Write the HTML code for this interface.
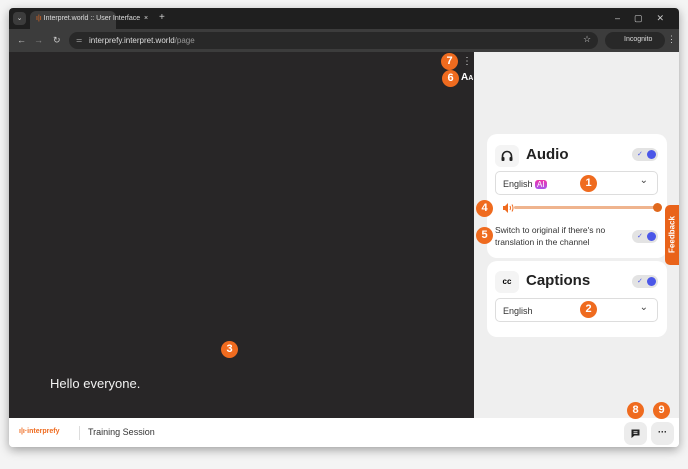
<!DOCTYPE html><html><head><style>
*{box-sizing:border-box;margin:0;padding:0}
body{width:688px;height:469px;background:#f4f4f4;font-family:"Liberation Sans",sans-serif;position:relative;overflow:hidden}
.a{position:absolute}
.win{left:9px;top:8px;width:670px;height:439px;background:#fff;box-shadow:0 3px 10px rgba(0,0,0,.35);border-radius:4px;overflow:hidden}
.b{position:absolute;width:17px;height:17px;border-radius:50%;background:#ef6b1f;color:#fff;font-weight:bold;font-size:11px;text-align:center;line-height:17px}
.card{background:#fff;border-radius:10px}
.tg{width:26px;height:13px;border-radius:7px;background:#e3e3e3}
.tg:after{content:"";position:absolute;right:2px;top:2px;width:9px;height:9px;border-radius:50%;background:#4b57e8}
.tg:before{content:"✓";position:absolute;left:5px;top:0;font-size:7px;color:#4b57e8;line-height:13px}
.sel{background:#fff;border:1px solid #ddd;border-radius:5px;height:24px;font-size:9px;color:#333;padding:7px 0 0 7px}
.sel:after{content:"⌄";position:absolute;right:9px;top:3px;font-size:10px;color:#444}
</style></head><body>
<div class="a win">
 <div class="a" style="left:0;top:0;width:670px;height:21px;background:#1f1f1f"></div>
 <div class="a" style="left:4px;top:4px;width:13px;height:13px;border-radius:4px;background:#3c3c3c;color:#ddd;font-size:7px;text-align:center;line-height:13px">⌄</div>
 <div class="a" style="left:21px;top:3px;width:86px;height:18px;background:#3c3c3c;border-radius:6px 6px 0 0"></div>
 <div class="a" style="left:27px;top:7px;font-size:7px;color:#ddd;white-space:nowrap"><span style="color:#ef6b1f">ı|ı</span> Interpret.world :: User Interface &nbsp;×</div>
 <div class="a" style="left:150px;top:4px;color:#ccc;font-size:10px">+</div>
 <div class="a" style="left:606px;top:5px;color:#ccc;font-size:9px;letter-spacing:14px">–▢✕</div>
 <div class="a" style="left:0;top:21px;width:670px;height:23px;background:#3c3c3c"></div>
 <div class="a" style="left:8px;top:27px;color:#ccc;font-size:9px">←</div>
 <div class="a" style="left:25px;top:27px;color:#888;font-size:9px">→</div>
 <div class="a" style="left:44px;top:27px;color:#ccc;font-size:9px">↻</div>
 <div class="a" style="left:60px;top:24px;width:529px;height:17px;border-radius:9px;background:#282828"></div>
 <div class="a" style="left:67px;top:28px;font-size:7px;color:#aaa">⚌</div>
 <div class="a" style="left:80px;top:28px;font-size:8px;color:#ddd">interprefy.interpret.world<span style="color:#999">/page</span></div>
 <div class="a" style="left:574px;top:26px;font-size:9px;color:#ccc">☆</div>
 <div class="a" style="left:596px;top:24px;width:60px;height:17px;border-radius:9px;background:#282828;font-size:7px;color:#ddd;padding:4px 0 0 19px">Incognito</div>
 <div class="a" style="left:658px;top:26px;font-size:9px;color:#ccc">⋮</div>
 <div class="a" style="left:0;top:44px;width:465px;height:366px;background:#282627"></div>
 <div class="a" style="left:465px;top:44px;width:205px;height:366px;background:#efefef"></div>
 <div class="a" style="left:453px;top:48px;color:#ddd;font-size:10px">⋮</div>
 <div class="a" style="left:452px;top:64px;color:#fff;font-size:10px;font-weight:bold">A<span style="font-size:7px">A</span></div>
 <div class="a" style="left:41px;top:368px;color:#f2f2f2;font-size:13px">Hello everyone.</div>
 <div class="a card" style="left:478px;top:126px;width:180px;height:124px"></div>
 <div class="a" style="left:486px;top:137px;width:24px;height:22px;border-radius:6px;background:#f4f4f4"><svg width="24" height="22" viewBox="0 0 24 22"><path d="M7.5 14v-3a4.5 4.5 0 0 1 9 0v3" fill="none" stroke="#222" stroke-width="1.6"/><rect x="6.5" y="12" width="3" height="4" rx="1" fill="#222"/><rect x="14.5" y="12" width="3" height="4" rx="1" fill="#222"/></svg></div>
 <div class="a" style="left:517px;top:138px;font-size:15px;font-weight:bold;color:#222">Audio</div>
 <div class="a tg" style="left:623px;top:140px"></div>
 <div class="a sel" style="left:486px;top:163px;width:163px">English <span style="background:linear-gradient(#e3a,#a5e);color:#fff;border-radius:3px;padding:0 2px;font-size:8px">AI</span></div>
 <svg class="a" style="left:494px;top:195px" width="11" height="10" viewBox="0 0 11 10"><path d="M0 3h2l3-3v10l-3-3H0z" fill="#ef6b1f"/><path d="M7 3q1 2 0 4M9 1.5q2 3.5 0 7" fill="none" stroke="#ef6b1f" stroke-width="1"/></svg>
 <div class="a" style="left:505px;top:198px;width:144px;height:3px;background:#efb48e;border-radius:2px"></div>
 <div class="a" style="left:644px;top:195px;width:9px;height:9px;border-radius:50%;background:#e0691d"></div>
 <div class="a" style="left:486px;top:216px;font-size:8.5px;color:#333;line-height:12px">Switch to original if there's no<br>translation in the channel</div>
 <div class="a tg" style="left:623px;top:222px"></div>
 <div class="a card" style="left:478px;top:253px;width:180px;height:76px"></div>
 <div class="a" style="left:486px;top:263px;width:24px;height:22px;border-radius:6px;background:#f4f4f4;font-size:8px;font-weight:bold;text-align:center;line-height:22px">cc</div>
 <div class="a" style="left:517px;top:264px;font-size:15px;font-weight:bold;color:#222">Captions</div>
 <div class="a tg" style="left:623px;top:267px"></div>
 <div class="a sel" style="left:486px;top:290px;width:163px">English</div>
 <div class="a" style="left:656px;top:197px;width:14px;height:60px;background:#e9631a;border-radius:5px 0 0 5px"></div>
 <div class="a" style="left:643px;top:222px;transform:rotate(-90deg);color:#fff;font-size:8px;font-weight:bold;width:40px;text-align:center">Feedback</div>
 <div class="a" style="left:0;top:410px;width:670px;height:29px;background:#fff"></div>
 <div class="a" style="left:10px;top:420px;font-size:7px;color:#ef6b1f;font-weight:bold">ı|ı·interprefy</div>
 <div class="a" style="left:70px;top:418px;width:1px;height:14px;background:#ddd"></div>
 <div class="a" style="left:79px;top:419px;font-size:9px;color:#333">Training Session</div>
 <div class="a" style="left:615px;top:414px;width:23px;height:23px;border-radius:7px;background:#ececec"><svg width="23" height="23" viewBox="0 0 23 23"><path d="M7.5 7.5h8v6h-5l-3 2.5z" fill="#222"/><path d="M9.5 9.8h4M9.5 11.6h4" stroke="#fff" stroke-width=".8"/></svg></div>
 <div class="a" style="left:642px;top:414px;width:23px;height:23px;border-radius:7px;background:#ececec;font-size:9px;text-align:center;line-height:20px;font-weight:bold">···</div>
</div>
<div class="b" style="left:441px;top:53px">7</div>
<div class="b" style="left:442px;top:70px">6</div>
<div class="b" style="left:580px;top:175px">1</div>
<div class="b" style="left:476px;top:200px">4</div>
<div class="b" style="left:476px;top:227px">5</div>
<div class="b" style="left:580px;top:301px">2</div>
<div class="b" style="left:221px;top:341px">3</div>
<div class="b" style="left:627px;top:402px">8</div>
<div class="b" style="left:653px;top:402px">9</div>
</body></html>
